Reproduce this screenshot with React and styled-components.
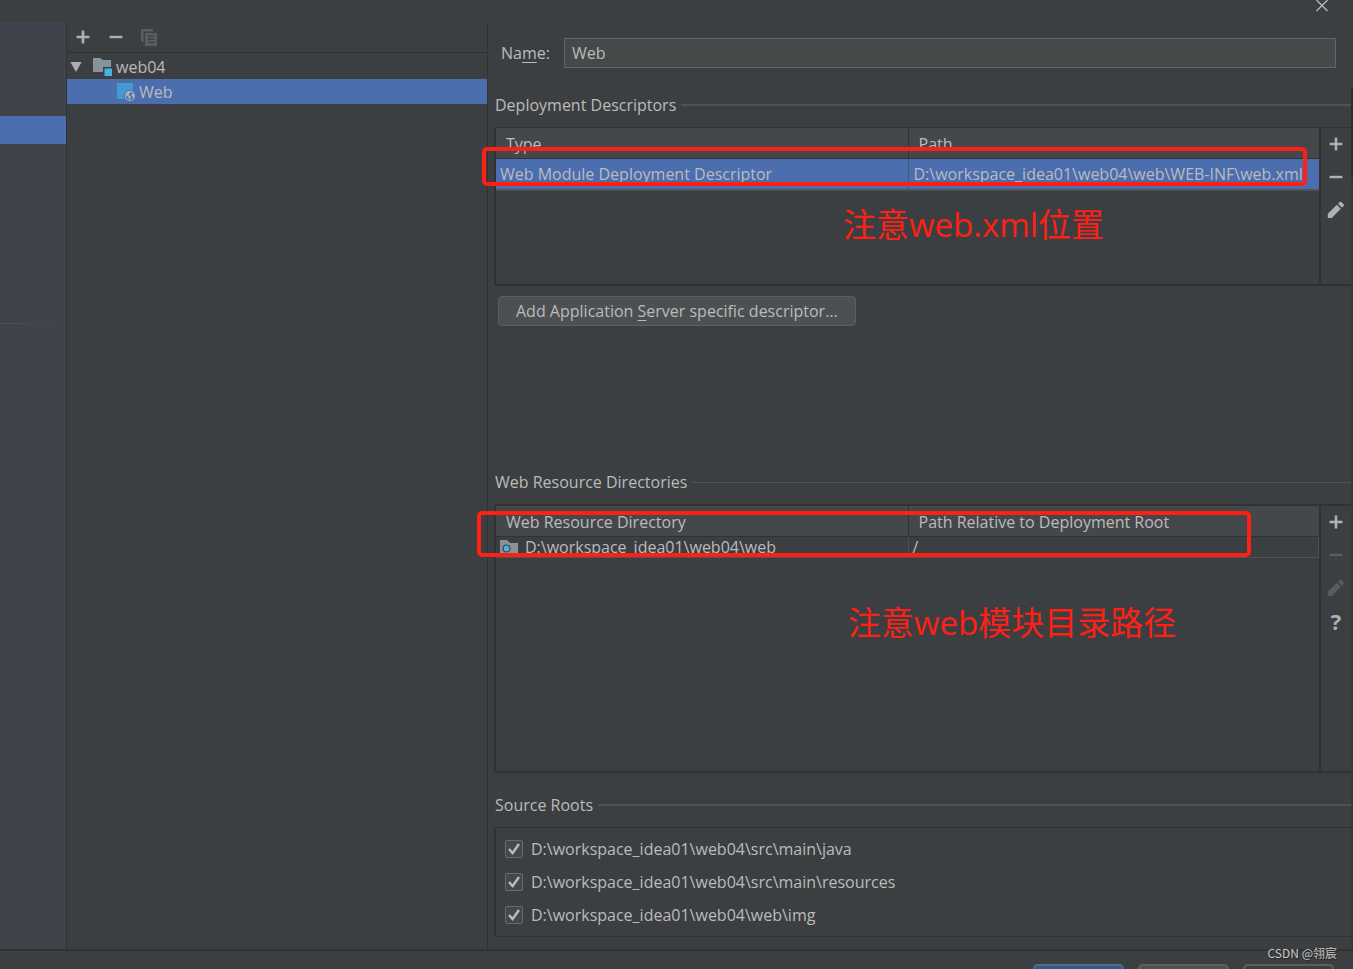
import { useState } from "react";
import styled, { createGlobalStyle } from "styled-components";

const GlobalStyle = createGlobalStyle`
*{
    box-sizing: border-box;
}
body{
    margin: 0;
    background: #3C3F41;
    color: #BBBBBB;
    font-family: "Open Sans", "Noto Sans", "Noto Sans CJK SC", sans-serif;
    font-size: 16px;
    line-height: 24px;
}
button, input{
    font: inherit;
    color: inherit;
}
u{
    text-underline-offset: 3px;
}
`;

const sourceRoots = [
    'D:\\workspace_idea01\\web04\\src\\main\\java',
    'D:\\workspace_idea01\\web04\\src\\main\\resources',
    'D:\\workspace_idea01\\web04\\web\\img',
];

function PlusIcon(){
    return(
        <svg width="14" height="14" viewBox="0 0 14 14" fill="currentColor">
            <path d="M5.7.6h2.6v5.1h5.1v2.6H8.3v5.1H5.7V8.3H.6V5.7h5.1z"/>
        </svg>
    )
}

function MinusIcon(){
    return(
        <svg width="14" height="14" viewBox="0 0 14 14" fill="currentColor">
            <path d="M.6 5.8h12.8v2.4H.6z"/>
        </svg>
    )
}

function PencilIcon(){
    return(
        <svg width="18" height="18" viewBox="0 0 18 18" fill="currentColor">
            <path d="M.8 12.8 9.8 3.8l4 4L4.8 17H.8zM11 2.7l1.6-1.6q.9-.8 1.8 0l2.2 2.2q.8.9 0 1.8L15 6.7z"/>
        </svg>
    )
}

function CopyIcon(){
    return(
        <svg width="16" height="17" viewBox="0 0 16 17">
            <path fill="#5A5D5E" d="M0 0h12v2.6H2.6V13H0z"/>
            <path fill="#5A5D5E" fillRule="evenodd" d="M4 4h12v13H4zM6.6 6.4v1.3h6.8V6.4zm0 3.2v1.3h6.8V9.6zm0 3.2v1.3h6.8v-1.3z"/>
        </svg>
    )
}

function CloseIcon(){
    return(
        <svg width="12" height="12" viewBox="0 0 12 12" stroke="#BBBBBB" strokeWidth="1.3">
            <path d="M.5 0l11 11M11.5 0l-11 11"/>
        </svg>
    )
}

function ModuleIcon(){
    return(
        <svg width="19" height="18" viewBox="0 0 19 18">
            <path fill="#87939A" d="M0 0h7l3 2h8v7h-8v5H0z"/>
            <path fill="#40B6E0" d="M11.5 10.5H19V18h-7.5z"/>
        </svg>
    )
}

function FacetIcon(){
    return(
        <svg width="18" height="18" viewBox="0 0 18 18">
            <path fill="#4399D0" d="M0 0h16v7.6A6.2 6.2 0 0 0 7.6 16H0z"/>
            <circle cx="12.9" cy="12.9" r="4.5" fill="none" stroke="#AAB4C0" strokeWidth="1.1"/>
            <path fill="#AAB4C0" d="M8.6 11.6q1-2.8 3.8-3.2l1.2 1-1.5 1.3.2 1.2-1.1.4 2.4.8.6 1.2-1.1 1-.4 1.7-1-1.2-.2-1.6zM15 10.2l2 1.2.2 2.6-1.2 1.4-.4-1.8-1.4-.8z"/>
        </svg>
    )
}

function WebFolderIcon(){
    return(
        <svg width="18" height="14" viewBox="0 0 18 14">
            <path fill="#87939A" d="M0 0h7l3 3h8v11H0z"/>
            <circle cx="6.5" cy="8.5" r="4" fill="#3C3F41"/>
            <circle cx="6.5" cy="8.5" r="2.9" fill="#40B6E0"/>
        </svg>
    )
}

function SectionTitle({ children, line = 2 }){
    return(
        <TitleRow>
            <h2>{children}</h2>
            <TitleLine $size={line}/>
        </TitleRow>
    )
}

function App(){
    const [name, setName] = useState('Web');
    const [checked, setChecked] = useState(sourceRoots);

    const onToggle = (root) => {
        if(checked.includes(root))
            setChecked(checked.filter((item) => item !== root));
        else
            setChecked([...checked, root]);
    }

    return(
        <Dialog>
            <GlobalStyle/>
            <TitleBar>
                <CloseBtn aria-label="Close"><CloseIcon/></CloseBtn>
            </TitleBar>
            <Body>
                <Sidebar>
                    <SidebarSelected/>
                    <SidebarLine/>
                </Sidebar>

                <TreePanel>
                    <TreeToolbar>
                        <IconBtn aria-label="Add"><PlusIcon/></IconBtn>
                        <IconBtn aria-label="Remove"><MinusIcon/></IconBtn>
                        <IconBtn aria-label="Copy" disabled><CopyIcon/></IconBtn>
                    </TreeToolbar>
                    <TreeRow $indent={3}>
                        <Arrow width="12" height="10" viewBox="0 0 12 10">
                            <path fill="#ADADAD" d="M.4 0h11.2L6 10z"/>
                        </Arrow>
                        <ModuleIcon/>
                        web04
                    </TreeRow>
                    <TreeRow $indent={50} $selected>
                        <FacetIcon/>
                        Web
                    </TreeRow>
                </TreePanel>

                <Content>
                    <NameRow>
                        <label htmlFor="name">Na<u>m</u>e:</label>
                        <NameInput id="name" value={name} onChange={(e) => setName(e.target.value)}/>
                    </NameRow>

                    <SectionTitle>Deployment Descriptors</SectionTitle>
                    <TableBox $height={159} $top={1}>
                        <TableArea>
                            <Table>
                                <colgroup>
                                    <FirstCol/>
                                    <col/>
                                </colgroup>
                                <thead>
                                    <tr>
                                        <th>Type</th>
                                        <th>Path</th>
                                    </tr>
                                </thead>
                                <tbody>
                                    <SelectedRow>
                                        <td>Web Module Deployment Descriptor</td>
                                        <td>D:\workspace_idea01\web04\web\WEB-INF\web.xml</td>
                                    </SelectedRow>
                                </tbody>
                            </Table>
                        </TableArea>
                        <SideTools>
                            <IconBtn aria-label="Add descriptor"><PlusIcon/></IconBtn>
                            <IconBtn aria-label="Remove descriptor"><MinusIcon/></IconBtn>
                            <IconBtn aria-label="Edit descriptor"><PencilIcon/></IconBtn>
                        </SideTools>
                        <DescriptorMark/>
                        <DescriptorNote>注意web.xml位置</DescriptorNote>
                    </TableBox>
                    <DescriptorBtn>Add Application <u>S</u>erver specific descriptor...</DescriptorBtn>

                    <SectionTitle line={1}>Web Resource Directories</SectionTitle>
                    <TableBox $height={269} $top={2}>
                        <TableArea>
                            <Table>
                                <colgroup>
                                    <FirstCol/>
                                    <col/>
                                </colgroup>
                                <thead>
                                    <tr>
                                        <th>Web Resource Directory</th>
                                        <th>Path Relative to Deployment Root</th>
                                    </tr>
                                </thead>
                                <tbody>
                                    <ResourceRow>
                                        <td><PathCell><WebFolderIcon/>D:\workspace_idea01\web04\web</PathCell></td>
                                        <td>/</td>
                                    </ResourceRow>
                                </tbody>
                            </Table>
                        </TableArea>
                        <SideTools>
                            <IconBtn aria-label="Add directory"><PlusIcon/></IconBtn>
                            <IconBtn aria-label="Remove directory" disabled><MinusIcon/></IconBtn>
                            <IconBtn aria-label="Edit directory" disabled><PencilIcon/></IconBtn>
                            <HelpBtn>?</HelpBtn>
                        </SideTools>
                        <ResourceMark/>
                        <ResourceNote>注意web模块目录路径</ResourceNote>
                    </TableBox>

                    <RootsSection>
                        <SectionTitle>Source Roots</SectionTitle>
                        <RootsBox>
                            {sourceRoots.map((root) => (
                                <RootLabel key={root}>
                                    <CheckBox
                                    type="checkbox"
                                    checked={checked.includes(root)}
                                    onChange={() => onToggle(root)}/>
                                    <CheckMark width="18" height="18" viewBox="0 0 18 18">
                                        <path fill="none" stroke="#BBBBBB" strokeWidth="2.4" d="M4 9l3.6 4L14 4"/>
                                    </CheckMark>
                                    {root}
                                </RootLabel>
                            ))}
                        </RootsBox>
                    </RootsSection>
                </Content>
                <Edge/>
            </Body>
            <Footer>
                <FooterBtn aria-label="OK" $bg="#365880" $line="#4C708C"/>
                <FooterBtn aria-label="Cancel" $bg="#4C5052" $line="#5E6060"/>
                <FooterBtn aria-label="Apply" $bg="#3C3F41" $line="#5E6060" disabled/>
            </Footer>
            <Watermark>CSDN @翎宸</Watermark>
        </Dialog>
    )
}

export default App

const Dialog = styled.div`
position: relative;
display: flex;
flex-direction: column;
height: 100vh;
overflow: hidden;
`;

const TitleBar = styled.div`
display: flex;
justify-content: flex-end;
height: 22px;
flex-shrink: 0;
padding-right: 22px;
`;

const CloseBtn = styled.button`
display: flex;
align-items: center;
justify-content: center;
width: 18px;
height: 12px;
padding: 0;
border: none;
background: none;
`;

const Body = styled.div`
display: flex;
flex: 1;
min-height: 0;
`;

const Sidebar = styled.div`
width: 67px;
flex-shrink: 0;
padding-top: 94px;
background: #3F434C;
border-right: 1px solid #323232;
`;

const SidebarSelected = styled.div`
height: 28px;
background: #4B6EAF;
`;

const SidebarLine = styled.div`
height: 1px;
width: 50px;
margin-top: 179px;
background: linear-gradient(to right, #50545B, #3F434C);
`;

const TreePanel = styled.div`
width: 421px;
flex-shrink: 0;
border-right: 1px solid #323232;
`;

const TreeToolbar = styled.div`
display: flex;
align-items: center;
gap: 15px;
height: 31px;
margin-bottom: 1px;
padding-left: 7px;
border-bottom: 1px solid #323232;
`;

const TreeRow = styled.div`
display: flex;
align-items: center;
gap: 4px;
height: 25px;
padding-left: ${props => props.$indent}px;
background: ${props => props.$selected ? '#4B6EAF' : 'transparent'};
`;

const Arrow = styled.svg`
margin-right: 7px;
`;

const IconBtn = styled.button`
display: flex;
align-items: center;
justify-content: center;
width: 18px;
height: 18px;
padding: 0;
border: none;
background: none;
color: #AFB1B3;
&:disabled{
    color: #5A5D5E;
}
`;

const HelpBtn = styled(IconBtn)`
font-size: 22px;
font-weight: 700;
`;

const Content = styled.div`
flex: 1;
min-width: 0;
padding-left: 6px;
`;

const NameRow = styled.div`
display: flex;
align-items: center;
gap: 14px;
margin: 16px 15px 25px 7px;
`;

const NameInput = styled.input`
flex: 1;
min-width: 0;
height: 30px;
padding: 0 7px;
background: #45494A;
border: 1px solid #646464;
outline: none;
`;

const TitleRow = styled.div`
display: flex;
align-items: center;
gap: 5px;
margin-bottom: 10px;
padding-left: 1px;
h2{
    margin: 0;
    font-size: 16px;
    font-weight: 400;
}
`;

const TitleLine = styled.div`
flex: 1;
height: ${props => props.$size}px;
background: #515151;
`;

const TableBox = styled.div`
position: relative;
display: flex;
height: ${props => props.$height}px;
border: solid #323232;
border-width: ${props => props.$top}px 0 2px 2px;
`;

const TableArea = styled.div`
flex: 1;
min-width: 0;
`;

const Table = styled.table`
width: 100%;
table-layout: fixed;
border-collapse: separate;
border-spacing: 0;
th, td{
    padding: 0 4px;
    text-align: left;
    font-weight: 400;
    white-space: nowrap;
}
th{
    height: 31px;
    padding: 2px 10px 0;
    background: #45484A;
    border-bottom: 1px solid #323232;
}
th + th{
    border-left: 1px solid #323232;
}
`;

const FirstCol = styled.col`
width: calc(50% - 1px);
`;

const SelectedRow = styled.tr`
td{
    height: 32px;
    background: #4B6EAF;
    border-bottom: 2px solid #515151;
}
td + td{
    padding-left: 5px;
    border-left: 1px solid #45597F;
}
`;

const ResourceRow = styled.tr`
td{
    height: 21px;
    line-height: 20px;
    border-bottom: 1px solid #515151;
}
td + td{
    border-left: 1px solid #515151;
    border-right: 1px solid #515151;
}
`;

const PathCell = styled.div`
display: flex;
align-items: center;
gap: 7px;
`;

const SideTools = styled.div`
display: flex;
flex-direction: column;
align-items: center;
gap: 15px;
width: 32px;
padding-top: 7px;
border-left: 2px solid #323232;
`;

const Mark = styled.div`
position: absolute;
border: 4px solid #FF2015;
border-radius: 5px;
pointer-events: none;
`;

const DescriptorMark = styled(Mark)`
top: 19px;
left: -14px;
right: 44px;
height: 39px;
`;

const ResourceMark = styled(Mark)`
top: 5px;
left: -19px;
right: 100px;
height: 46px;
`;

const Note = styled.div`
position: absolute;
color: #FF2015;
font-family: "Open Sans", "Noto Sans CJK SC", sans-serif;
font-size: 33px;
line-height: 48px;
white-space: nowrap;
pointer-events: none;
`;

const DescriptorNote = styled(Note)`
top: 73px;
left: 347px;
`;

const ResourceNote = styled(Note)`
top: 93px;
left: 352px;
`;

const DescriptorBtn = styled.button`
display: block;
height: 30px;
margin: 10px 0 144px 4px;
padding: 0 17px;
border: 1px solid #5E6060;
border-radius: 4px;
background: #4C5052;
`;

const RootsSection = styled.div`
padding-top: 20px;
`;

const RootsBox = styled.div`
display: flex;
flex-direction: column;
gap: 9px;
padding: 9px;
border: solid #323232;
border-width: 1px 0 1px 2px;
`;

const RootLabel = styled.label`
position: relative;
display: flex;
align-items: center;
gap: 8px;
`;

const CheckBox = styled.input`
appearance: none;
width: 18px;
height: 18px;
margin: 0;
border: 1px solid #6B6B6B;
border-radius: 2px;
background: #43494A;
`;

const CheckMark = styled.svg`
position: absolute;
left: 0;
pointer-events: none;
${CheckBox}:not(:checked) + &{
    display: none;
}
`;

const Edge = styled.div`
width: 2px;
flex-shrink: 0;
background: linear-gradient(#3C3F41 66px, #2B2B2B 66px, #2B2B2B 155px, #36393B 155px);
`;

const Footer = styled.div`
display: flex;
justify-content: flex-end;
gap: 14px;
height: 20px;
flex-shrink: 0;
padding: 13px 19px 0 0;
border-top: 2px solid #323232;
`;

const FooterBtn = styled.button`
width: 91px;
height: 30px;
border: 2px solid ${props => props.$line};
border-radius: 5px;
background: ${props => props.$bg};
`;

const Watermark = styled.div`
position: absolute;
right: 16px;
bottom: 6px;
color: #C8C8C8;
font-family: "Noto Sans CJK SC", sans-serif;
font-size: 12px;
line-height: 20px;
text-shadow: 1px 1px 1px #222;
`;
